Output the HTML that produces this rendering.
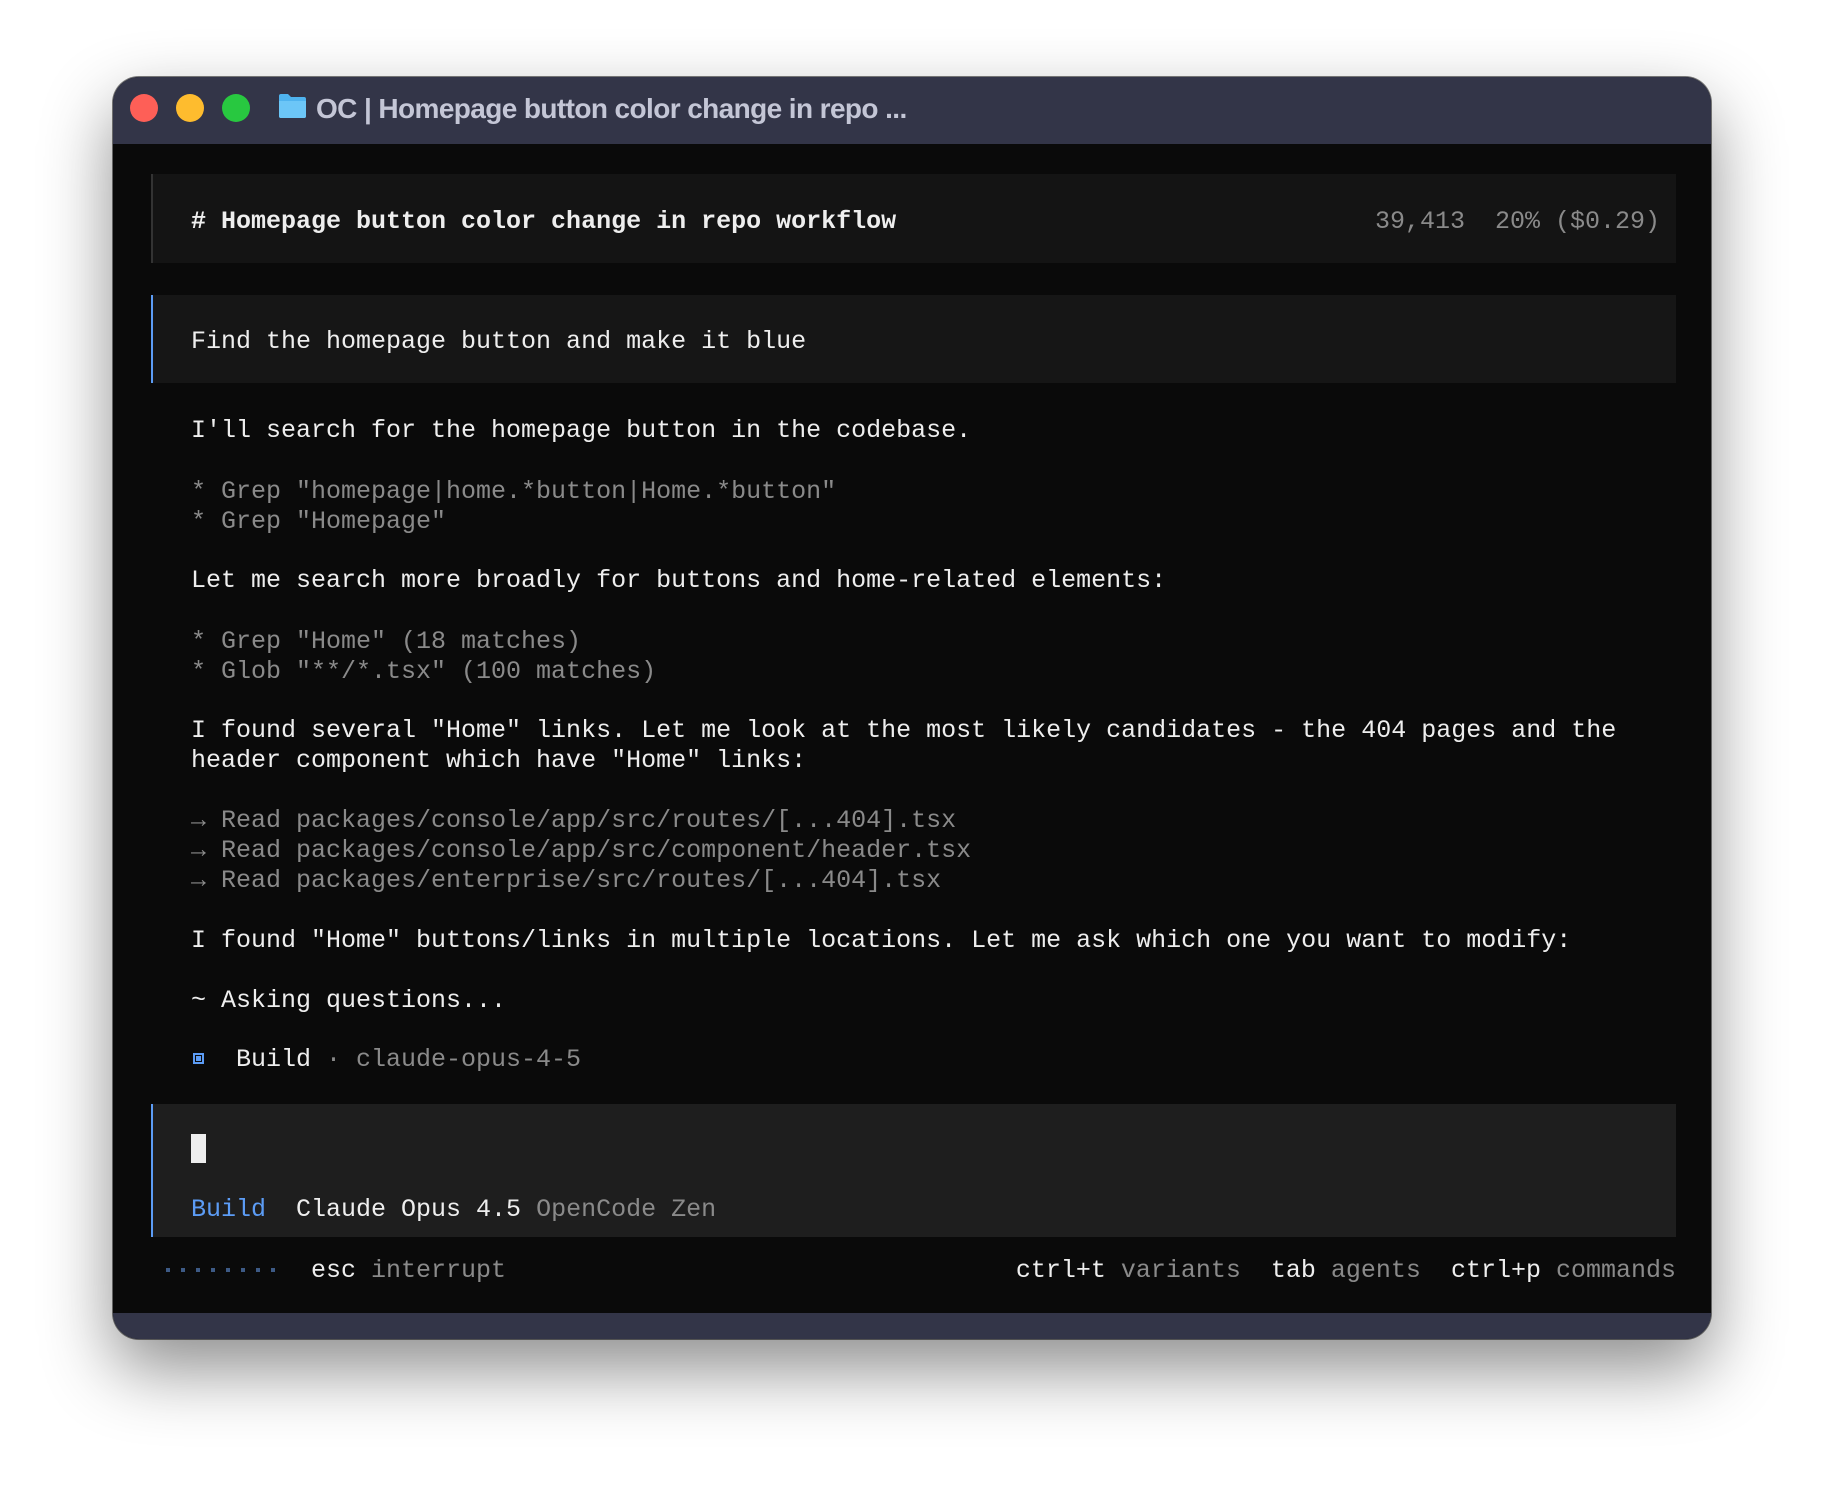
<!DOCTYPE html>
<html><head><meta charset="utf-8"><style>
*{margin:0;padding:0;box-sizing:border-box}
body{width:1824px;height:1488px;background:#fff;position:relative;overflow:hidden;font-family:"Liberation Mono",monospace}
.win{position:absolute;left:113px;top:77px;width:1598px;height:1262px;border-radius:26px;background:#0a0a0a;overflow:hidden;box-shadow:0 30px 70px rgba(0,0,0,.45),0 0 0 1px rgba(0,0,0,.5)}
.tb{position:absolute;left:0;top:0;width:100%;height:67px;background:#333548}
.bb{position:absolute;left:0;bottom:0;width:100%;height:26px;background:#333548}
.dot{position:absolute;top:17px;width:28px;height:28px;border-radius:50%}
.title{position:absolute;left:203px;top:16px;font:bold 28px "Liberation Sans",sans-serif;color:#c4c6d6;letter-spacing:-0.6px}
.l{position:absolute;font-size:25px;line-height:30px;height:30px;white-space:pre;color:#eeeeee}
.d{color:#8a8a8a}
.blk{position:absolute}
</style></head><body>
<div class="win">
<div class="tb"></div>
<div class="dot" style="left:17px;background:#fe5f57"></div>
<div class="dot" style="left:63px;background:#febc2e"></div>
<div class="dot" style="left:109px;background:#28c840"></div>
<svg style="position:absolute;left:165px;top:16px" width="29" height="26" viewBox="0 0 29 26"><path d="M1 3 Q1 1 3 1 H10 L13 4 H26 Q28 4 28 6 V23 Q28 25 26 25 H3 Q1 25 1 23 Z" fill="#4fb3ef"/><path d="M1 8 H28 V23 Q28 25 26 25 H3 Q1 25 1 23 Z" fill="#6cc6f7"/></svg>
<div class="title">OC | Homepage button color change in repo ...</div>
<div class="bb"></div>
</div>
<div class="blk" style="left:151px;top:174px;width:1525px;height:89px;background:#141414;border-left:2px solid #333"></div>
<div class="blk" style="left:151px;top:295px;width:1525px;height:88px;background:#161616;border-left:2px solid #5c9cf5"></div>
<div class="blk" style="left:151px;top:1104px;width:1525px;height:133px;background:#1e1e1e;border-left:2px solid #5c9cf5"></div>
<div class="l" style="left:191px;top:207px;font-weight:bold"># Homepage button color change in repo workflow</div>
<div class="l d" style="right:164px;top:207px">39,413  20% ($0.29)</div>
<div class="l" style="left:191px;top:327px">Find the homepage button and make it blue</div>
<div class="l" style="left:191px;top:416px">I'll search for the homepage button in the codebase.</div>
<div class="l d" style="left:191px;top:477px">* Grep "homepage|home.*button|Home.*button"</div>
<div class="l d" style="left:191px;top:507px">* Grep "Homepage"</div>
<div class="l" style="left:191px;top:566px">Let me search more broadly for buttons and home-related elements:</div>
<div class="l d" style="left:191px;top:627px">* Grep "Home" (18 matches)</div>
<div class="l d" style="left:191px;top:657px">* Glob "**/*.tsx" (100 matches)</div>
<div class="l" style="left:191px;top:716px">I found several "Home" links. Let me look at the most likely candidates - the 404 pages and the</div>
<div class="l" style="left:191px;top:746px">header component which have "Home" links:</div>
<div class="l d" style="left:191px;top:806px">→ Read packages/console/app/src/routes/[...404].tsx</div>
<div class="l d" style="left:191px;top:836px">→ Read packages/console/app/src/component/header.tsx</div>
<div class="l d" style="left:191px;top:866px">→ Read packages/enterprise/src/routes/[...404].tsx</div>
<div class="l" style="left:191px;top:926px">I found "Home" buttons/links in multiple locations. Let me ask which one you want to modify:</div>
<div class="l" style="left:191px;top:986px">~ Asking questions...</div>
<div class="blk" style="left:193px;top:1053px;width:11px;height:11px;border:2px solid #5c9cf5;background:#0a0a0a"><div style="margin:1px;width:5px;height:5px;background:#5c9cf5"></div></div>
<div class="l" style="left:236px;top:1045px">Build <span class="d">· claude-opus-4-5</span></div>
<div class="blk" style="left:191px;top:1134px;width:15px;height:29px;background:#eee"></div>
<div class="l" style="left:191px;top:1195px"><span style="color:#5c9cf5">Build</span>  Claude Opus 4.5 <span class="d">OpenCode Zen</span></div>
<div class="blk" style="left:166px;top:1268px;width:120px;height:4px;background:repeating-linear-gradient(90deg,#3d5a85 0 4px,transparent 4px 15px)"></div>
<div class="l" style="left:311px;top:1256px">esc <span class="d">interrupt</span></div>
<div class="l" style="right:148px;top:1256px">ctrl+t <span class="d">variants</span>  tab <span class="d">agents</span>  ctrl+p <span class="d">commands</span></div>
</body></html>
